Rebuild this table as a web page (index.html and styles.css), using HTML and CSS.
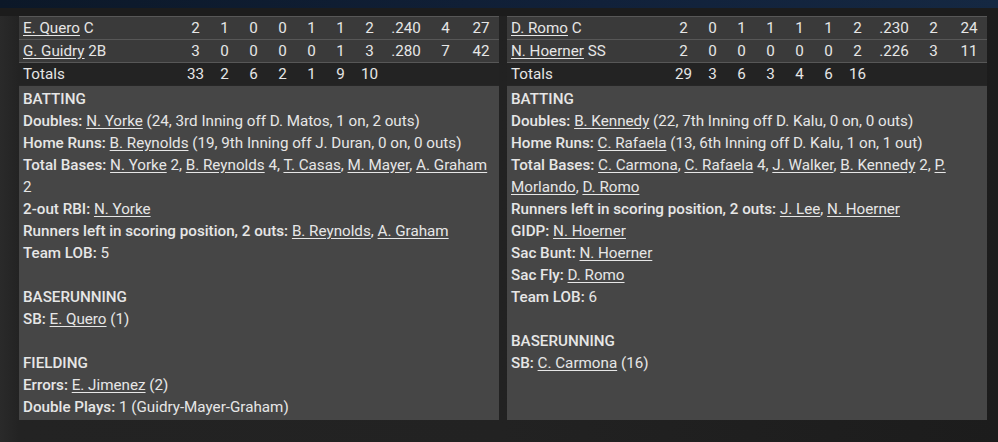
FILE: index.html
```html
<!DOCTYPE html>
<html>
<head>
<meta charset="utf-8">
<link rel="stylesheet" href="styles.css">
</head>
<body>
<div class="topbar"></div>
<div class="main">
  <div class="col">
    <div class="table">
      <div class="row"><span class="name"><a>E. Quero</a> C</span><span>2</span><span>1</span><span>0</span><span>0</span><span>1</span><span>1</span><span>2</span><span>.240</span><span>4</span><span>27</span></div>
      <div class="row"><span class="name"><a>G. Guidry</a> 2B</span><span>3</span><span>0</span><span>0</span><span>0</span><span>0</span><span>1</span><span>3</span><span>.280</span><span>7</span><span>42</span></div>
      <div class="row totals"><span class="name">Totals</span><span>33</span><span>2</span><span>6</span><span>2</span><span>1</span><span>9</span><span>10</span><span></span><span></span><span></span></div>
    </div>
    <div class="panel">
      <div class="head">BATTING</div>
      <div><b>Doubles:</b> <a>N. Yorke</a> (24, 3rd Inning off D. Matos, 1 on, 2 outs)</div>
      <div><b>Home Runs:</b> <a>B. Reynolds</a> (19, 9th Inning off J. Duran, 0 on, 0 outs)</div>
      <div><b>Total Bases:</b> <a>N. Yorke</a> 2, <a>B. Reynolds</a> 4, <a>T. Casas</a>, <a>M. Mayer</a>, <a>A. Graham</a> 2</div>
      <div><b>2-out RBI:</b> <a>N. Yorke</a></div>
      <div><b>Runners left in scoring position, 2 outs:</b> <a>B. Reynolds</a>, <a>A. Graham</a></div>
      <div><b>Team LOB:</b> 5</div>
      <div class="blank"></div>
      <div class="head">BASERUNNING</div>
      <div><b>SB:</b> <a>E. Quero</a> (1)</div>
      <div class="blank"></div>
      <div class="head">FIELDING</div>
      <div><b>Errors:</b> <a>E. Jimenez</a> (2)</div>
      <div><b>Double Plays:</b> 1 (Guidry-Mayer-Graham)</div>
    </div>
  </div>
  <div class="col">
    <div class="table">
      <div class="row"><span class="name"><a>D. Romo</a> C</span><span>2</span><span>0</span><span>1</span><span>1</span><span>1</span><span>1</span><span>2</span><span>.230</span><span>2</span><span>24</span></div>
      <div class="row"><span class="name"><a>N. Hoerner</a> SS</span><span>2</span><span>0</span><span>0</span><span>0</span><span>0</span><span>0</span><span>2</span><span>.226</span><span>3</span><span>11</span></div>
      <div class="row totals"><span class="name">Totals</span><span>29</span><span>3</span><span>6</span><span>3</span><span>4</span><span>6</span><span>16</span><span></span><span></span><span></span></div>
    </div>
    <div class="panel">
      <div class="head">BATTING</div>
      <div><b>Doubles:</b> <a>B. Kennedy</a> (22, 7th Inning off D. Kalu, 0 on, 0 outs)</div>
      <div><b>Home Runs:</b> <a>C. Rafaela</a> (13, 6th Inning off D. Kalu, 1 on, 1 out)</div>
      <div><b>Total Bases:</b> <a>C. Carmona</a>, <a>C. Rafaela</a> 4, <a>J. Walker</a>, <a>B. Kennedy</a> 2, <a>P. Morlando</a>, <a>D. Romo</a></div>
      <div><b>Runners left in scoring position, 2 outs:</b> <a>J. Lee</a>, <a>N. Hoerner</a></div>
      <div><b>GIDP:</b> <a>N. Hoerner</a></div>
      <div><b>Sac Bunt:</b> <a>N. Hoerner</a></div>
      <div><b>Sac Fly:</b> <a>D. Romo</a></div>
      <div><b>Team LOB:</b> 6</div>
      <div class="blank"></div>
      <div class="head">BASERUNNING</div>
      <div><b>SB:</b> <a>C. Carmona</a> (16)</div>
    </div>
  </div>
</div>
</body>
</html>
```

FILE: styles.css
```css
* { box-sizing: border-box; }
html, body { margin: 0; padding: 0; }
body {
  width: 998px;
  height: 442px;
  overflow: hidden;
  background: linear-gradient(to right, #2a2a2a 0px, #232323 19px, #222 500px, #1c1c1c 998px);
  font-family: Roboto, "Noto Sans", sans-serif;
  font-size: 15.2px;
  color: #e6e6e6;
}
.topbar {
  height: 8px;
  background: linear-gradient(to right, #0c1828, #11213a 60%, #152842);
}
.main {
  display: grid;
  grid-template-columns: 480px 480px;
  column-gap: 8px;
  padding: 8px 0 0 19px;
  height: 412px;
  background: linear-gradient(to bottom, #1c1c1c 0, #1c1c1c 8px, transparent 8px);
}
.col {
  display: flex;
  flex-direction: column;
  background: #262626;
}
.table { display: flex; flex-direction: column; }
.row {
  display: grid;
  grid-template-columns: 1fr repeat(7, 29px) 44px 35px 36px;
  height: 23px;
  border-top: 1px solid #575757;
  background: #3a3a3a;
  align-items: center;
  line-height: 22px;
}
.row span { text-align: center; }
.row .name { text-align: left; padding-left: 4px; }
.row.totals { background: #232323; }
a {
  color: inherit;
  text-decoration: underline;
  text-underline-offset: 2px;
}
.panel {
  flex: 1;
  margin-top: 1px;
  background: #464646;
  padding: 2px 4px;
  line-height: 22px;
}
.panel b { font-weight: 500; }
.head { font-weight: 500; }
.blank { height: 22px; }
```
